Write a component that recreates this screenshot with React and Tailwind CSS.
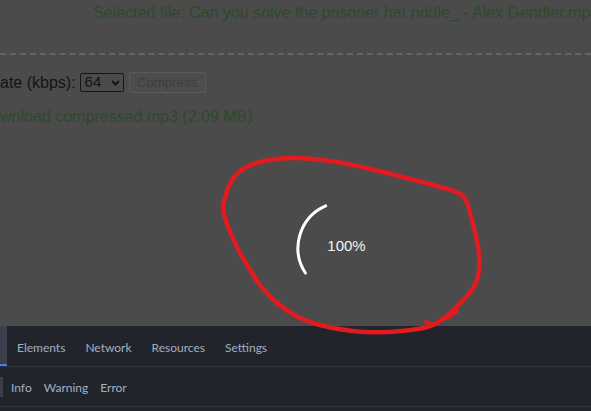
import React from "react";

// freehand annotation loop, traced from the screenshot
const loop = [
  [223, 205], [230, 180], [248, 164], [285, 157], [330, 160], [380, 171],
  [430, 184], [458, 192], [466, 198], [471, 216], [477, 240], [480, 260],
  [478, 280], [470, 293], [455, 309], [442, 320], [430, 327], [405, 331],
  [370, 333], [335, 329], [305, 321], [282, 308], [262, 289], [245, 262],
  [231, 236], [223, 212], [223, 205],
];

function smoothPath(pts) {
  const mid = (a, b) => [(a[0] + b[0]) / 2, (a[1] + b[1]) / 2];
  let m = mid(pts[0], pts[1]);
  let d = `M${pts[0][0]},${pts[0][1]} L${m[0]},${m[1]}`;
  for (let i = 1; i < pts.length - 1; i++) {
    const n = mid(pts[i], pts[i + 1]);
    d += ` Q${pts[i][0]},${pts[i][1]} ${n[0]},${n[1]}`;
  }
  const last = pts[pts.length - 1];
  return d + ` L${last[0]},${last[1]}`;
}

export default function App() {
  const tabs = ["Elements", "Network", "Resources", "Settings"];
  const levels = ["Info", "Warning", "Error"];

  return (
    <div className="relative w-[591px] h-[411px] overflow-hidden bg-[#4b4b4b] flex flex-col font-['Liberation_Sans',Arial,sans-serif]">
      {/* page under the loading overlay */}
      <div className="h-[326px] shrink-0 overflow-hidden">
        <p className="pl-[93px] pt-[4px] text-[16px] leading-[18px] whitespace-nowrap text-[#2c4a2c]">
          Selected file: Can you solve the prisoner hat riddle_ - Alex Gendler.mp3
        </p>
        <div className="mt-[31px] border-t-2 border-dashed border-[#646464]" />

        <div className="mt-[17px] flex items-center h-[21px] text-[16px] text-[#141414]">
          <span className="whitespace-nowrap">ate (kbps):</span>
          <div className="ml-[4px] w-[44px] h-[19px] border border-[#161616] rounded-[2px] flex items-center justify-between pl-[4px] pr-[3px] text-[15px]">
            <span>64</span>
            <svg width="9" height="6" viewBox="0 0 9 6">
              <path d="M1 1 L4.5 4.5 L8 1" fill="none" stroke="#141414" strokeWidth="2" />
            </svg>
          </div>
          <button className="ml-[5px] w-[77px] h-[21px] border border-[#5a5a5a] rounded-[2px] bg-[#4d4d4d] text-[13.33px] text-[#3d3d3d]">
            Compress
          </button>
        </div>

        <p className="mt-[15px] text-[16px] leading-[18px] whitespace-nowrap text-[#2c4a2c]">
          wnload compressed.mp3 (2.09 MB)
        </p>
      </div>

      {/* devtools strip */}
      <div className="flex-1 bg-[#21252b] font-['Lato',sans-serif] text-[12px] text-[#a4aec0]">
        <div className="h-[41px] flex border-b border-[#2f343d]">
          <div className="w-[7px] bg-[#3a3f4b] border-b-2 border-[#3b82f6]" />
          {tabs.map((t) => (
            <div key={t} className="px-[10px] pt-[3px] flex items-center">
              {t}
            </div>
          ))}
        </div>
        <div className="h-[40px] flex items-center border-b border-[#2f343d]">
          <div className="w-[3px] h-[20px] bg-[#3a3f4b]" />
          <div className="ml-[2px] pt-[3px] flex">
            {levels.map((l) => (
              <div key={l} className="px-[6px]">
                {l}
              </div>
            ))}
          </div>
        </div>
      </div>

      {/* spinner */}
      <div className="absolute left-[294px] top-[198px] w-[100px] h-[100px]">
        <svg width="100" height="100" viewBox="0 0 100 100" className="absolute inset-0">
          <path
            d="M31.7 7.8 A46 46 0 0 0 11.4 75.05"
            fill="none"
            stroke="#ffffff"
            strokeWidth="3"
            strokeLinecap="round"
          />
        </svg>
        <div className="absolute inset-0 flex items-center justify-center pl-[5px] pb-[3px] text-[15px] text-[#f2f2f2]">
          100%
        </div>
      </div>

      {/* red marker annotation */}
      <svg
        width="591"
        height="411"
        viewBox="0 0 591 411"
        className="absolute inset-0 pointer-events-none"
      >
        <path
          d={smoothPath(loop)}
          fill="none"
          stroke="#e11b1f"
          strokeWidth="4.5"
          strokeLinecap="round"
          strokeLinejoin="round"
        />
        <path
          d="M457 311 L447 318 M430 324 L426 322"
          fill="none"
          stroke="#e11b1f"
          strokeWidth="4"
          strokeLinecap="round"
        />
      </svg>
    </div>
  );
}
